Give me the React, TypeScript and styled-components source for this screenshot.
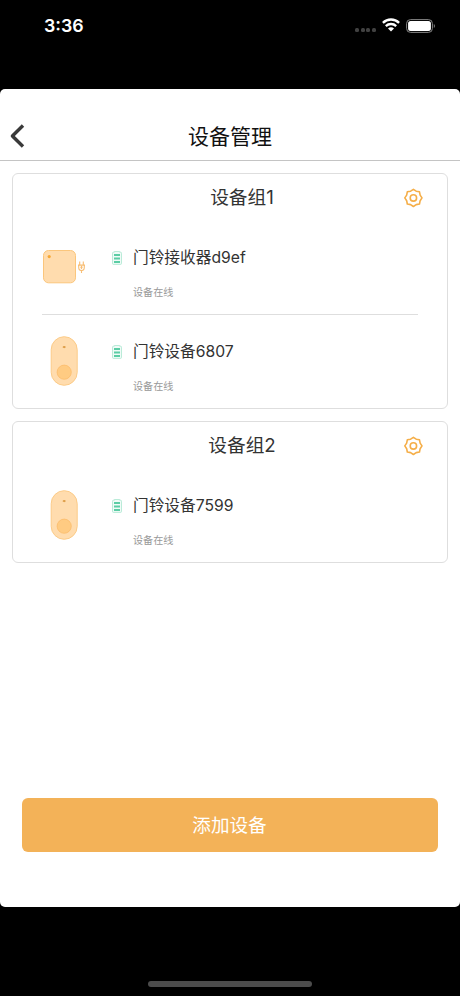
import React from 'react';
import styled, { createGlobalStyle } from 'styled-components';

const GlobalStyle = createGlobalStyle`
  * { box-sizing: border-box; }
  body {
    margin: 0;
    background: #000;
    font-family: Inter, "Noto Sans CJK SC", sans-serif;
  }
  svg { display: block; flex: none; }
`;

const Screen = styled.div`
  width: 460px;
  height: 996px;
  display: flex;
  flex-direction: column;
  background: #000;
  overflow: hidden;
`;

const StatusBar = styled.header`
  height: 89px;
  flex: none;
  display: flex;
  justify-content: space-between;
  align-items: flex-start;
  padding: 14px 24px 0 44px;
`;

const Clock = styled.time`
  color: #fff;
  font-size: 17.8px;
  line-height: 23px;
  font-weight: 600;
`;

const Indicators = styled.div`
  display: flex;
  align-items: center;
  height: 23px;
`;

const SignalDots = styled.div`
  display: flex;
  gap: 1.6px;
  margin: 9px 6px 0 0;
`;

const Dot = styled.span`
  width: 4px;
  height: 4px;
  border-radius: 1.5px;
  background: #414141;
`;

const Sheet = styled.main`
  height: 818px;
  flex: none;
  display: flex;
  flex-direction: column;
  background: #fff;
  border-radius: 5px;
`;

const NavBar = styled.nav`
  height: 72px;
  flex: none;
  display: grid;
  grid-template-columns: 40px 1fr 40px;
  padding-top: 32px;
  border-bottom: 1px solid #c4c4c4;
`;

const BackButton = styled.button`
  border: 0;
  padding: 3px 0 0 9px;
  background: none;
  display: flex;
  align-items: flex-start;
`;

const Title = styled.h1`
  margin: 0;
  text-align: center;
  font-size: 21px;
  line-height: 31px;
  font-weight: 400;
  color: #111;
`;

const Groups = styled.div`
  flex: 1;
  display: flex;
  flex-direction: column;
  gap: 12px;
  padding: 12px 12px 0;
`;

const GroupCard = styled.section`
  border: 1px solid #dedede;
  border-radius: 6px;
  width: 436px;
`;

const GroupHeader = styled.div`
  height: 47px;
  display: grid;
  grid-template-columns: 56px 1fr 44px;
  align-items: center;
`;

const GroupName = styled.h2`
  grid-column: 2;
  margin: 0;
  padding-left: 12px;
  text-align: center;
  font-size: 18.7px;
  line-height: 28px;
  font-weight: 400;
  color: #333;
`;

const Row = styled.div<{ $divided?: boolean }>`
  height: ${(p) => (p.$divided ? 94 : 93)}px;
  margin: 0 29px;
  display: grid;
  grid-template-columns: 44px 26px 10px 1fr;
  border-bottom: ${(p) => (p.$divided ? '1px solid #dedede' : '0')};
`;

const Picture = styled.div`
  grid-column: 1;
  padding-top: 21px;
`;

const Battery = styled.div`
  grid-column: 3;
  padding-top: 30px;
`;

const Info = styled.div`
  grid-column: 4;
  padding: 25px 0 0 11px;
`;

const DeviceName = styled.div`
  font-size: 15.7px;
  line-height: 24px;
  color: #333;
`;

const DeviceState = styled.div`
  margin-top: 15px;
  font-size: 10.1px;
  line-height: 14px;
  color: #999;
`;

const Footer = styled.div`
  flex: none;
  padding: 0 22px 55px;
`;

const AddButton = styled.button`
  width: 100%;
  height: 54px;
  padding: 0 1px 0 0;
  border: 0;
  border-radius: 6px;
  background: #f3b258;
  color: #fff;
  font: 400 18.6px/54px Inter, "Noto Sans CJK SC", sans-serif;
`;

const HomeArea = styled.div`
  flex: 1;
  display: flex;
  justify-content: center;
  align-items: flex-end;
  padding-bottom: 9px;
`;

const HomeIndicator = styled.div`
  width: 164px;
  height: 6px;
  border-radius: 3px;
  background: #4c4c4c;
`;

const WifiSlot = styled.div`
  margin: 0 6px 1px 0;
`;

const WifiIcon = () => (
  <svg width="18" height="14" viewBox="0 0 18 14" fill="none" stroke="#fff">
    <path d="M.9 4.8a11.7 11.7 0 0 1 16.2 0" strokeWidth="2.4" />
    <path d="M3.8 8.1a7.5 7.5 0 0 1 10.4 0" strokeWidth="2.3" />
    <path d="M9 13.5 6 10.5a4.2 4.2 0 0 1 6 0Z" fill="#fff" stroke="none" />
  </svg>
);

const PhoneBattery = () => (
  <svg width="30" height="14" viewBox="0 0 30 14">
    <rect x=".6" y=".6" width="25.8" height="12.8" rx="3.9" fill="none" stroke="#858585" strokeWidth="1" />
    <rect x="2.1" y="2.1" width="22.8" height="9.8" rx="2.5" fill="#fff" />
    <path d="M27.8 5v4c1.6-.6 1.6-3.4 0-4Z" fill="#777" />
  </svg>
);

const gearPoints = Array.from({ length: 16 }, (_, i) => {
  const r = i % 2 === 0 ? 8.6 : 7.3;
  const a = (i * Math.PI) / 8;
  return `${(10.4 + r * Math.sin(a)).toFixed(2)},${(9.9 - r * Math.cos(a)).toFixed(2)}`;
}).join(' ');

const GearIcon = () => (
  <svg width="20" height="20" viewBox="0 0 20 20" fill="none" stroke="#f5ae48" strokeWidth="1.6" strokeLinejoin="round">
    <polygon points={gearPoints} />
    <circle cx="10.4" cy="9.9" r="3.2" />
  </svg>
);

const ReceiverPicture = () => (
  <svg width="44" height="50" viewBox="0 0 44 50">
    <rect x="1.5" y="8.5" width="32" height="32.3" rx="5" fill="#ffdcae" stroke="#fbc67c" />
    <circle cx="7.2" cy="14.6" r="1.6" fill="#f7a936" />
    <g fill="none" stroke="#f8bd72" strokeWidth="1.1">
      <path d="M37.7 19.5v3.6M41.3 19.5v3.6M36 23.1h7M36.7 23.1v2.2c0 2 1.2 3.3 2.8 3.3s2.8-1.3 2.8-3.3v-2.2M39.5 28.6v2.4" />
      <path d="m39.9 23.8-.9 1.5h1l-.8 1.6" />
    </g>
  </svg>
);

const DoorbellPicture = () => (
  <svg width="44" height="50" viewBox="0 0 44 50">
    <rect x="9.2" y=".7" width="26" height="48.6" rx="13" fill="#ffdcae" stroke="#fccb87" />
    <circle cx="22.2" cy="36.2" r="7.1" fill="#ffcb82" stroke="#fbb966" strokeWidth=".7" />
    <path d="M20.5 11.3a1.8 1.8 0 0 1 3.4 0l-1.7 1Z" fill="#dd9c46" />
  </svg>
);

const DeviceBattery = () => (
  <svg width="10" height="14" viewBox="0 0 10 14">
    <path d="M2.4 1.2V.5h5.2v.7h.9q1 0 1 1v10.2q0 1-1 1h-7q-1 0-1-1V2.2q0-1 1-1Z" fill="#f0fbf7" stroke="#a9e6cf" strokeWidth=".8" />
    <path d="M2 3.9h6M2 7.4h6M2 10.9h6" stroke="#5bcda5" strokeWidth="2" />
  </svg>
);

type Device = { name: string; kind: 'receiver' | 'doorbell' };
type Group = { name: string; devices: Device[] };

const groups: Group[] = [
  {
    name: '设备组1',
    devices: [
      { name: '门铃接收器d9ef', kind: 'receiver' },
      { name: '门铃设备6807', kind: 'doorbell' },
    ],
  },
  { name: '设备组2', devices: [{ name: '门铃设备7599', kind: 'doorbell' }] },
];

export default function App() {
  return (
    <Screen lang="zh-CN">
      <GlobalStyle />
      <StatusBar>
        <Clock>3:36</Clock>
        <Indicators>
          <SignalDots>
            <Dot />
            <Dot />
            <Dot />
            <Dot />
          </SignalDots>
          <WifiSlot>
            <WifiIcon />
          </WifiSlot>
          <PhoneBattery />
        </Indicators>
      </StatusBar>
      <Sheet>
        <NavBar>
          <BackButton aria-label="返回">
            <svg width="16" height="24" viewBox="0 0 16 24" fill="none" stroke="#3a3a3a" strokeWidth="3.4">
              <path d="M14 1.5 3.4 12 14 22.5" strokeLinejoin="round" />
            </svg>
          </BackButton>
          <Title>设备管理</Title>
        </NavBar>
        <Groups>
          {groups.map((g) => (
            <GroupCard key={g.name}>
              <GroupHeader>
                <GroupName>{g.name}</GroupName>
                <GearIcon />
              </GroupHeader>
              {g.devices.map((d, i) => (
                <Row key={d.name} $divided={i < g.devices.length - 1}>
                  <Picture>{d.kind === 'receiver' ? <ReceiverPicture /> : <DoorbellPicture />}</Picture>
                  <Battery>
                    <DeviceBattery />
                  </Battery>
                  <Info>
                    <DeviceName>{d.name}</DeviceName>
                    <DeviceState>设备在线</DeviceState>
                  </Info>
                </Row>
              ))}
            </GroupCard>
          ))}
        </Groups>
        <Footer>
          <AddButton>添加设备</AddButton>
        </Footer>
      </Sheet>
      <HomeArea>
        <HomeIndicator />
      </HomeArea>
    </Screen>
  );
}
